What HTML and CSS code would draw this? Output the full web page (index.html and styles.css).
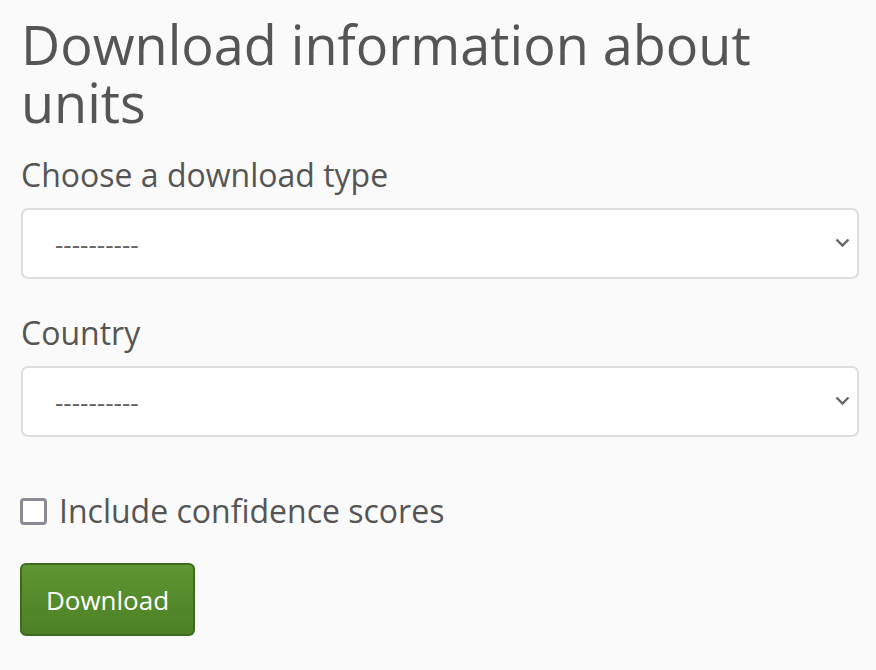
FILE: index.html
```html
<!DOCTYPE html>
<html lang="en">
<head>
<meta charset="utf-8">
<title>Download information about units</title>
<link rel="stylesheet" href="styles.css">
</head>
<body>
<main class="page">
  <h1 class="title">Download information about units</h1>
  <form class="form">
    <div class="field">
      <label class="label" for="dtype">Choose a download type</label>
      <div class="select-wrap">
        <select id="dtype" class="select"><option>----------</option></select>
        <svg class="chev" width="15" height="10" viewBox="0 0 15 10"><path d="M1.5 1.5 L7.5 7.5 L13.5 1.5" fill="none" stroke="#666" stroke-width="2.4"/></svg>
      </div>
    </div>
    <div class="field">
      <label class="label" for="country">Country</label>
      <div class="select-wrap">
        <select id="country" class="select"><option>----------</option></select>
        <svg class="chev" width="15" height="10" viewBox="0 0 15 10"><path d="M1.5 1.5 L7.5 7.5 L13.5 1.5" fill="none" stroke="#666" stroke-width="2.4"/></svg>
      </div>
    </div>
    <label class="check">
      <span class="box"></span>
      <span class="check-text">Include confidence scores</span>
    </label>
    <div class="actions">
      <button type="button" class="btn">Download</button>
    </div>
  </form>
</main>
</body>
</html>
```

FILE: styles.css
```css
html, body {
  margin: 0;
  padding: 0;
  background: #fafafa;
}
body {
  font-family: "Open Sans", "Noto Sans", sans-serif;
  color: #555;
}
.page {
  padding: 15px 17px 0 21px;
}
.title {
  margin: 0;
  font-size: 54px;
  font-weight: 400;
  line-height: 58px;
  color: #555;
}
.form {
  display: flex;
  flex-direction: column;
}
.field {
  display: flex;
  flex-direction: column;
}
.field + .field {
  margin-top: 32px;
}
.label {
  font-size: 32px;
  line-height: 44px;
  margin-top: 22px;
  margin-bottom: 11px;
  color: #555;
}
.field + .field .label {
  margin-top: 0;
}
.select-wrap {
  position: relative;
}
.select {
  appearance: none;
  -webkit-appearance: none;
  width: 100%;
  height: 71px;
  box-sizing: border-box;
  border: 2px solid #ddd;
  border-radius: 7px;
  background: #fff;
  font-family: "Open Sans", "Noto Sans", sans-serif;
  font-size: 26px;
  color: #666;
  padding: 0 0 0 32px;
  display: block;
}
.chev {
  position: absolute;
  right: 9px;
  top: 30px;
}
.check {
  display: flex;
  align-items: center;
  gap: 12px;
  margin-top: 52px;
  font-size: 32px;
  line-height: 44px;
  color: #555;
}
.box {
  width: 21px;
  height: 21px;
  border: 3.5px solid #8b8b96;
  border-radius: 4px;
  background: #fff;
  flex: none;
  margin-left: -1px;
}
.actions {
  margin-top: 30px;
}
.btn {
  width: 175px;
  height: 73px;
  border: 2px solid #3d6a1c;
  border-radius: 6px;
  background: linear-gradient(#5e9631, #4c8026);
  color: #fff;
  font-family: "Open Sans", "Noto Sans", sans-serif;
  font-size: 26px;
  padding: 0;
  margin-left: -1px;
}
```
